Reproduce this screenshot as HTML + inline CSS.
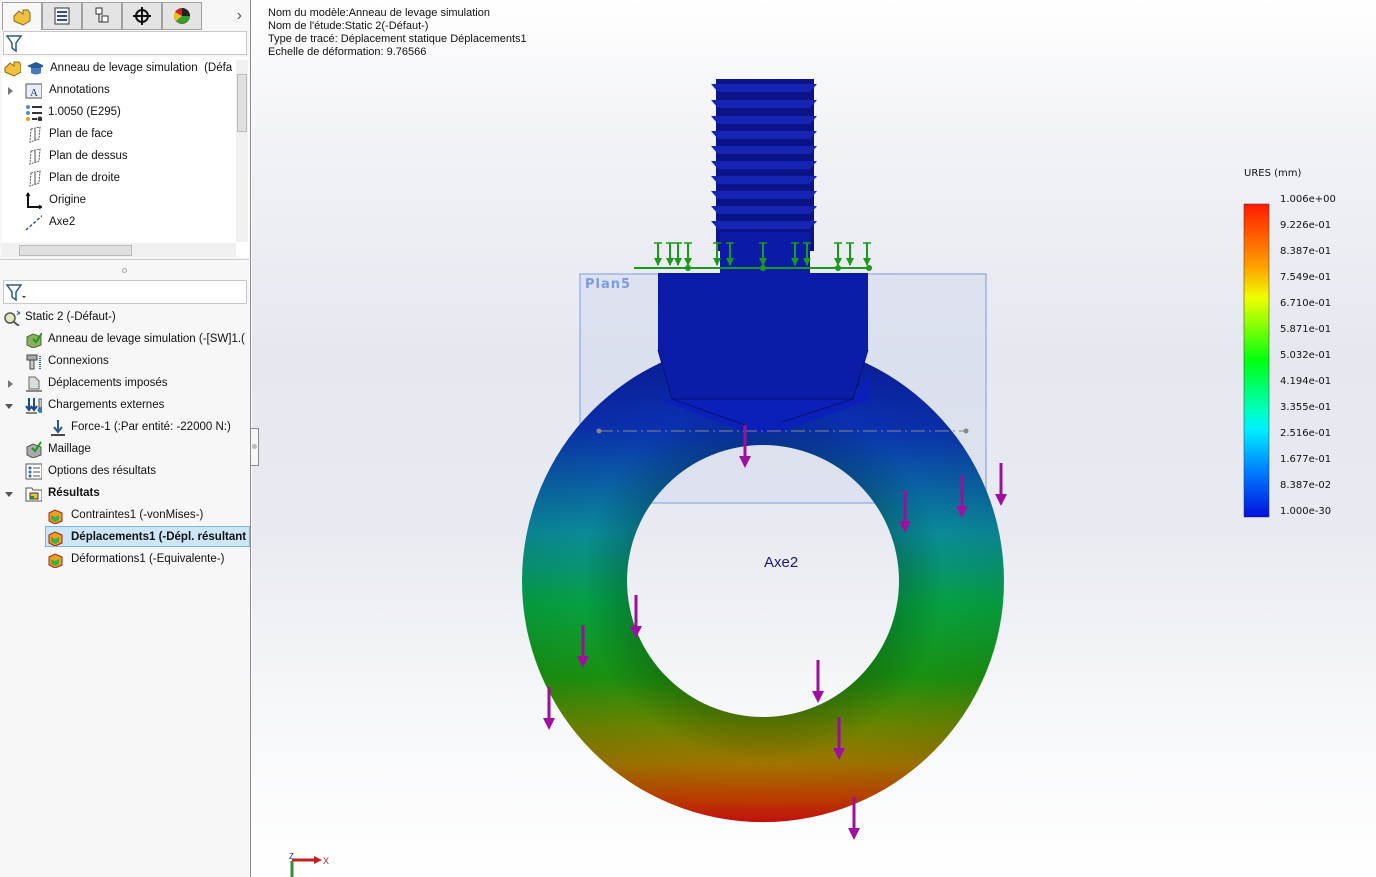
<!DOCTYPE html>
<html><head><meta charset="utf-8">
<style>
*{margin:0;padding:0;box-sizing:border-box}
body{width:1376px;height:877px;overflow:hidden;position:relative;font-family:"Liberation Sans",sans-serif;background:#fff}
#left{position:absolute;left:0;top:0;width:251px;height:877px;background:#f7f7f7;border-right:1px solid #8a8a90}
.tabs{position:absolute;top:2px;left:2px;height:28px;display:flex}
.tab{width:40px;height:28px;border:1px solid #a0a0a0;background:#e4e4e4;margin-right:0;display:flex;align-items:center;justify-content:center}
.tab.sel{background:#f7f7f7;border-bottom:none}
.filter{position:absolute;left:3px;width:244px;height:24px;border:1px solid #c8c8c8;background:#fff}
.row{position:absolute;left:0;height:22px;font-size:11.5px;color:#111;white-space:nowrap;line-height:22px}
.row .ic{position:absolute;top:3px;width:17px;height:17px}
.row span{position:absolute}
.tri{position:absolute;top:8px;width:0;height:0}
.tri.r{border-left:5px solid #777;border-top:4px solid transparent;border-bottom:4px solid transparent}
.tri.d{border-top:5px solid #555;border-left:4px solid transparent;border-right:4px solid transparent;top:10px}
#view{position:absolute;left:252px;top:0;width:1124px;height:877px;background:linear-gradient(180deg,#ffffff 0%,#f2f3f7 15%,#e6e8f0 40%,#e9eaf1 60%,#f6f7f9 80%,#ffffff 100%)}
.info{position:absolute;left:268px;font-size:11px;color:#111;line-height:13px}
.leg{position:absolute;left:1280px;font-size:10px;font-family:"DejaVu Sans","Liberation Sans",sans-serif;color:#111}
</style></head><body>
<div id="view"></div>
<div id="left">
  <div class="tabs">
    <div class="tab sel"><svg width="22" height="20"><path d="M3 9 L8 4 L12 7 L12 3 L17 3 L19 6 L19 14 L12 18 L3 14Z" fill="#f0c040" stroke="#8a6a10"/></svg></div>
    <div class="tab"><svg width="20" height="20"><rect x="3" y="2" width="14" height="16" fill="#fff" stroke="#333"/><path d="M5 6h10M5 10h10M5 14h10" stroke="#2a4a9a" stroke-width="2"/></svg></div>
    <div class="tab"><svg width="20" height="20"><rect x="4" y="2" width="6" height="6" fill="#fff" stroke="#333"/><rect x="10" y="10" width="6" height="6" fill="#fff" stroke="#333"/><path d="M7 8v8h3" stroke="#333" fill="none"/></svg></div>
    <div class="tab"><svg width="20" height="20"><circle cx="10" cy="10" r="6" fill="none" stroke="#111" stroke-width="2"/><path d="M10 1v18M1 10h18" stroke="#111" stroke-width="2"/></svg></div>
    <div class="tab"><svg width="20" height="20"><circle cx="10" cy="10" r="8" fill="#d02020"/><path d="M10 10 L18 10 A8 8 0 0 1 4 15Z" fill="#30a030"/><path d="M10 10 L4 15 A8 8 0 0 1 3 6Z" fill="#f0c020"/><path d="M10 10L10 2A8 8 0 0 1 18 10Z" fill="#222"/></svg></div>
    <div style="width:40px;color:#555;font-size:16px;line-height:28px;text-align:right">›</div>
  </div>
  <div class="filter" style="top:31px"><svg width="20" height="22"><path d="M3 4h14l-5 7v8l-4-3v-5z" fill="#fff" stroke="#2a5a8a" stroke-width="1.5"/></svg></div>
  <div style="position:absolute;left:2px;top:57px;width:247px;height:200px;background:#fff"></div>
  <div style="position:absolute;left:236px;top:60px;width:12px;height:182px;background:#f0f0f0"></div>
  <div style="position:absolute;left:237px;top:74px;width:10px;height:58px;background:#e0e0e0;border:1px solid #bbb"></div>
  <div style="position:absolute;left:2px;top:243px;width:234px;height:14px;background:#f0f0f0"></div>
  <div style="position:absolute;left:19px;top:245px;width:113px;height:11px;background:#e0e0e0;border:1px solid #bbb"></div>
  <div style="position:absolute;left:0;top:259px;width:251px;height:1px;background:#ccc"></div>
  <div style="position:absolute;left:122px;top:268px;width:5px;height:5px;border-radius:50%;border:1px solid #aaa"></div>
  <div class="filter" style="top:280px"><svg width="24" height="22"><path d="M3 4h14l-5 7v8l-4-3v-5z" fill="#fff" stroke="#2a5a8a" stroke-width="1.5"/><path d="M18 15h4l-2 2z" fill="#333"/></svg></div>

  <div class="row" style="top:57px"><svg class="ic" style="left:4px" width="20" height="17"><path d="M1 8 L6 3 L10 6 L10 2 L15 2 L17 5 L17 12 L10 16 L1 12Z" fill="#f0c040" stroke="#8a6a10"/></svg><svg class="ic" style="left:26px" width="20" height="17"><path d="M1 6 L10 2 L19 6 L10 10Z" fill="#2a5a9a"/><path d="M5 8v5c3 2 7 2 10 0V8" fill="#4a7aba"/></svg><span style="left:50px">Anneau de levage simulation &nbsp;(Défa</span></div>
  <div class="row" style="top:79px"><i class="tri r" style="left:8px"></i><svg class="ic" style="left:25px" width="18" height="17"><rect x="1" y="2" width="16" height="14" fill="#e8eef8" stroke="#555"/><text x="5" y="14" font-size="11" font-family="Liberation Serif" fill="#1a3a8a">A</text></svg><span style="left:49px">Annotations</span></div>
  <div class="row" style="top:101px"><svg class="ic" style="left:25px" width="18" height="17"><circle cx="3" cy="3" r="2" fill="#5a8ac0"/><circle cx="3" cy="9" r="2" fill="#5a8ac0"/><circle cx="3" cy="15" r="2" fill="#e0a020"/><path d="M7 3h10M7 9h10M7 15h5" stroke="#333" stroke-width="2"/><circle cx="15" cy="15" r="2.5" fill="#333"/></svg><span style="left:48px">1.0050 (E295)</span></div>
  <div class="row" style="top:123px"><svg class="ic" style="left:27px" width="16" height="17"><path d="M4 3 L13 1 L12 13 L3 16Z" fill="none" stroke="#555" stroke-dasharray="2 1"/><path d="M8 3v12" stroke="#555"/></svg><span style="left:49px">Plan de face</span></div>
  <div class="row" style="top:145px"><svg class="ic" style="left:27px" width="16" height="17"><path d="M4 3 L13 1 L12 13 L3 16Z" fill="none" stroke="#555" stroke-dasharray="2 1"/><path d="M8 3v12" stroke="#555"/></svg><span style="left:49px">Plan de dessus</span></div>
  <div class="row" style="top:167px"><svg class="ic" style="left:27px" width="16" height="17"><path d="M4 3 L13 1 L12 13 L3 16Z" fill="none" stroke="#555" stroke-dasharray="2 1"/><path d="M8 3v12" stroke="#555"/></svg><span style="left:49px">Plan de droite</span></div>
  <div class="row" style="top:189px"><svg class="ic" style="left:25px" width="20" height="17"><path d="M3 1v14h13" stroke="#111" stroke-width="2" fill="none"/><path d="M1 4l2-3 2 3M14 13l3 2-3 2" stroke="#111" fill="none"/></svg><span style="left:49px">Origine</span></div>
  <div class="row" style="top:211px"><svg class="ic" style="left:25px" width="20" height="17"><path d="M1 16 L18 1" stroke="#2a5a8a" stroke-width="1.5" stroke-dasharray="3 2"/></svg><span style="left:49px">Axe2</span></div>
  <div class="row" style="top:233px;height:10px;overflow:hidden"><svg class="ic" style="left:28px" width="18" height="17"><circle cx="9" cy="9" r="7" fill="#3a7ab0"/></svg><span style="left:49px;top:-2px">Révolution1</span></div>

  <div class="row" style="top:306px"><svg class="ic" style="left:3px" width="20" height="17"><circle cx="7" cy="9" r="5" fill="#e0e8c0" stroke="#555" stroke-width="1.5"/><path d="M11 13l5 4" stroke="#555" stroke-width="2"/><path d="M14 2l4 4M18 2l-4 4" stroke="#2a6ab0"/></svg><span style="left:25px">Static 2 (-Défaut-)</span></div>
  <div class="row" style="top:328px"><svg class="ic" style="left:25px" width="18" height="17"><path d="M2 6l6-3 8 3v8l-8 3-6-3z" fill="#8ab060" stroke="#4a6a30"/><path d="M8 8l3 3 6-9" stroke="#1a9a1a" stroke-width="2" fill="none"/></svg><span style="left:48px">Anneau de levage simulation (-[SW]1.(</span></div>
  <div class="row" style="top:350px"><svg class="ic" style="left:25px" width="18" height="17"><rect x="2" y="2" width="10" height="5" fill="#aaa" stroke="#444"/><rect x="5" y="7" width="4" height="9" fill="#ccc" stroke="#444"/><path d="M15 3v13" stroke="#2a6ab0" stroke-dasharray="1 1" stroke-width="2"/></svg><span style="left:48px">Connexions</span></div>
  <div class="row" style="top:372px"><i class="tri r" style="left:8px"></i><svg class="ic" style="left:25px" width="18" height="17"><path d="M4 2h6l4 4v8H4z" fill="#ddd" stroke="#666"/><path d="M1 16h16" stroke="#888" stroke-width="2"/></svg><span style="left:48px">Déplacements imposés</span></div>
  <div class="row" style="top:394px"><i class="tri d" style="left:5px"></i><svg class="ic" style="left:25px" width="20" height="17"><path d="M4 1v12M1 9l3 4 3-4M9 1v12M6 9l3 4 3-4" stroke="#1a4a8a" stroke-width="2" fill="none"/><path d="M1 16h11" stroke="#111"/><rect x="14" y="2" width="3" height="10" fill="#ccc" stroke="#555"/><circle cx="15.5" cy="13" r="3" fill="#3a7ab0"/></svg><span style="left:48px">Chargements externes</span></div>
  <div class="row" style="top:416px"><svg class="ic" style="left:49px" width="18" height="17"><path d="M9 1v11M5 8l4 5 4-5" stroke="#2a5a8a" stroke-width="2" fill="none"/><path d="M2 16h14" stroke="#111" stroke-width="1.5"/></svg><span style="left:71px">Force-1 (:Par entité: -22000 N:)</span></div>
  <div class="row" style="top:438px"><svg class="ic" style="left:25px" width="18" height="17"><path d="M2 6l6-3 8 3v8l-8 3-6-3z" fill="#aaa" stroke="#555"/><path d="M7 7l3 3 6-9" stroke="#1a9a1a" stroke-width="2" fill="none"/></svg><span style="left:48px">Maillage</span></div>
  <div class="row" style="top:460px"><svg class="ic" style="left:25px" width="18" height="17"><rect x="1" y="1" width="16" height="15" fill="#fff" stroke="#555"/><circle cx="5" cy="5" r="1.5" fill="#2a6ab0"/><circle cx="5" cy="9" r="1.5" fill="#2a6ab0"/><circle cx="5" cy="13" r="1.5" fill="#2a6ab0"/><path d="M8 5h7M8 9h7M8 13h7" stroke="#555"/></svg><span style="left:48px">Options des résultats</span></div>
  <div class="row" style="top:482px"><i class="tri d" style="left:5px"></i><svg class="ic" style="left:25px" width="18" height="17"><path d="M1 3h6l1 2h9v11H1z" fill="#fff" stroke="#555"/><rect x="5" y="8" width="8" height="6" fill="#f0c040" stroke="#333"/><rect x="5" y="11" width="4" height="3" fill="#2a8a2a"/></svg><span style="left:48px;font-weight:bold">Résultats</span></div>
  <div class="row" style="top:504px"><svg class="ic" style="left:47px" width="20" height="17"><path d="M2 6l6-3 7 3v8l-7 3-6-3z" fill="#f0a020" stroke="#a02020"/><path d="M4 8l4 2 4-2v5l-4 2-4-2z" fill="#40b040"/></svg><span style="left:71px">Contraintes1 (-vonMises-)</span></div>
  <div style="position:absolute;left:45px;top:526px;width:205px;height:21px;background:#cde6f7;border:1px solid #7ab8e4"></div>
  <div class="row" style="top:526px"><svg class="ic" style="left:47px" width="20" height="17"><path d="M2 6l6-3 7 3v8l-7 3-6-3z" fill="#f0a020" stroke="#a02020"/><path d="M4 8l4 2 4-2v5l-4 2-4-2z" fill="#40b040"/></svg><span style="left:71px;font-weight:bold">Déplacements1 (-Dépl. résultant</span></div>
  <div class="row" style="top:548px"><svg class="ic" style="left:47px" width="20" height="17"><path d="M2 6l6-3 7 3v8l-7 3-6-3z" fill="#f0a020" stroke="#a02020"/><path d="M4 8l4 2 4-2v5l-4 2-4-2z" fill="#40b040"/></svg><span style="left:71px">Déformations1 (-Equivalente-)</span></div>
</div>
<div style="position:absolute;left:251px;top:428px;width:8px;height:38px;background:#f7f7f7;border:1px solid #8a8a90;border-left:none"></div>
<div style="position:absolute;left:252px;top:444px;width:5px;height:5px;border-radius:50%;background:#bbb"></div>

<div class="info" style="top:7px">Nom du modèle:Anneau de levage simulation</div>
<div class="info" style="top:20px">Nom de l'étude:Static 2(-Défaut-)</div>
<div class="info" style="top:33px">Type de tracé: Déplacement statique Déplacements1</div>
<div class="info" style="top:46px">Echelle de déformation: 9.76566</div>

<svg style="position:absolute;left:0;top:0" width="1376" height="877">
<defs>
<linearGradient id="ring" x1="0" y1="340" x2="0" y2="822" gradientUnits="userSpaceOnUse">
<stop offset="0" stop-color="#0a1a98"/>
<stop offset="0.18" stop-color="#0a30b0"/>
<stop offset="0.4" stop-color="#0a8a98"/>
<stop offset="0.55" stop-color="#06a040"/>
<stop offset="0.7" stop-color="#1a9010"/>
<stop offset="0.8" stop-color="#6a8400"/>
<stop offset="0.88" stop-color="#a07400"/>
<stop offset="0.95" stop-color="#c04000"/>
<stop offset="1" stop-color="#cc1010"/>
</linearGradient>
<radialGradient id="shade" cx="763" cy="581" r="241" gradientUnits="userSpaceOnUse">
<stop offset="0.56" stop-color="#000" stop-opacity="0.18"/>
<stop offset="0.75" stop-color="#000" stop-opacity="0"/>
<stop offset="1" stop-color="#000" stop-opacity="0.05"/>
</radialGradient>
<linearGradient id="leg" x1="0" y1="0" x2="0" y2="1">
<stop offset="0" stop-color="#ff1a00"/><stop offset="0.2" stop-color="#ffa000"/><stop offset="0.3" stop-color="#f0ff00"/><stop offset="0.5" stop-color="#00ff10"/><stop offset="0.66" stop-color="#00ffc0"/><stop offset="0.72" stop-color="#00f0ff"/><stop offset="0.85" stop-color="#0080ff"/><stop offset="1" stop-color="#0010e0"/>
</linearGradient>
</defs>
<!-- plane (behind) -->
<rect x="580" y="274" width="406" height="229" fill="rgba(170,190,235,0.18)" stroke="#7a9ce0" stroke-width="1"/>
<text x="585" y="288" font-family="DejaVu Sans" font-weight="bold" font-size="13" fill="#7a9ce0" letter-spacing="1">Plan5</text>
<path fill-rule="evenodd" fill="url(#ring)" d="M522 581 A241 241 0 1 0 1004 581 A241 241 0 1 0 522 581Z M627 581 A136 136 0 1 1 899 581 A136 136 0 1 1 627 581Z"/>
<path fill-rule="evenodd" fill="url(#shade)" d="M522 581 A241 241 0 1 0 1004 581 A241 241 0 1 0 522 581Z M627 581 A136 136 0 1 1 899 581 A136 136 0 1 1 627 581Z"/>
<rect x="660" y="395" width="200" height="40" fill="#0a22b8" opacity="0"/>
<!-- thread -->
<rect x="716" y="79" width="98" height="172" fill="#0a1488"/>
<g fill="#1624b4">
<path d="M711 84 L817 84 L810 92 L718 92Z"/><path d="M711 100 L817 100 L810 108 L718 108Z"/><path d="M711 116 L817 116 L810 124 L718 124Z"/><path d="M711 131 L817 131 L810 139 L718 139Z"/><path d="M711 146 L817 146 L810 154 L718 154Z"/><path d="M711 161 L817 161 L810 169 L718 169Z"/><path d="M711 176 L817 176 L810 184 L718 184Z"/><path d="M711 191 L817 191 L810 199 L718 199Z"/><path d="M711 206 L817 206 L810 214 L718 214Z"/><path d="M711 221 L817 221 L810 229 L718 229Z"/>
</g>
<rect x="720" y="232" width="90" height="42" fill="#0c1aa8"/>
<!-- head -->
<path d="M680 398 L855 398 L870 370 L870 400 L780 432 L745 432 L660 400Z" fill="#0a20b8"/>
<path d="M658 273 L868 273 L868 350 L853 399 L672 399 L658 350Z" fill="#0a1ca8"/>
<path d="M658 350 L672 399 L853 399 L868 350" stroke="#061070" stroke-width="1" fill="none"/>
<path d="M672 399 L745 425 M853 399 L782 422" stroke="#061070" stroke-width="1"/>
<path d="M599 431 L966 431" stroke="#888" stroke-dasharray="14 4 2 4"/>
<circle cx="599" cy="431" r="2.5" fill="#888"/><circle cx="966" cy="431" r="2.5" fill="#888"/>
<text x="764" y="567" font-family="Liberation Sans" font-size="15" fill="#1a1a7a">Axe2</text>
<!-- green fixtures -->
<g stroke="#1a9a1a" stroke-width="2" fill="#1a9a1a">
<path d="M634 268 L870 268"/>
<path d="M658 243v22M670 243v22M678 243v22M688 243v22M717 243v22M730 243v22M763 243v22M795 243v22M807 243v22M838 243v22M850 243v22M867 243v22"/>
<path d="M654 243h8M666 243h8M674 243h8M684 243h8M713 243h8M726 243h8M759 243h8M791 243h8M803 243h8M834 243h8M846 243h8M863 243h8" stroke-width="1.5"/>
</g>
<g fill="#1a9a1a">
<path d="M654 258h8l-4 8zM666 258h8l-4 8zM674 258h8l-4 8zM684 258h8l-4 8zM713 258h8l-4 8zM726 258h8l-4 8zM759 258h8l-4 8zM791 258h8l-4 8zM803 258h8l-4 8zM834 258h8l-4 8zM846 258h8l-4 8zM863 258h8l-4 8z"/>
<circle cx="688" cy="268" r="3"/><circle cx="763" cy="268" r="3"/><circle cx="838" cy="268" r="3"/><circle cx="869" cy="268" r="3"/>
</g>
<!-- purple arrows -->
<g stroke="#9a109a" stroke-width="3" fill="#a010a0">
<path d="M745 425v33M905 490v33M962 475v33M1001 463v33M636 595v33M583 625v33M549 687v33M818 660v33M839 717v33M854 797v33"/>
</g>
<g fill="#a010a0">
<path d="M739 456h12l-6 12zM899 521h12l-6 12zM956 506h12l-6 12zM995 494h12l-6 12zM630 626h12l-6 12zM577 656h12l-6 12zM543 718h12l-6 12zM812 691h12l-6 12zM833 748h12l-6 12zM848 828h12l-6 12z"/>
</g>
<!-- legend -->
<rect x="1244" y="204" width="25" height="313" fill="url(#leg)" stroke="#333" stroke-width="0.5"/>
<!-- axis triad -->
<path d="M292 860 L316 860" stroke="#c02020" stroke-width="3"/><path d="M314 856 L322 860 L314 864Z" fill="#c02020"/>
<path d="M292 861 L292 877" stroke="#3a8a3a" stroke-width="3"/>
<text x="323" y="864" font-size="9" fill="#c02020" font-family="Liberation Sans">X</text>
<text x="289" y="859" font-size="8" fill="#2020c0" font-family="Liberation Sans">Z</text>
</svg>
<div class="leg" style="left:1244px;top:168px;font-size:10px">URES (mm)</div>
<div class="leg" style="top:194px">1.006e+00</div>
<div class="leg" style="top:220px">9.226e-01</div>
<div class="leg" style="top:246px">8.387e-01</div>
<div class="leg" style="top:272px">7.549e-01</div>
<div class="leg" style="top:298px">6.710e-01</div>
<div class="leg" style="top:324px">5.871e-01</div>
<div class="leg" style="top:350px">5.032e-01</div>
<div class="leg" style="top:376px">4.194e-01</div>
<div class="leg" style="top:402px">3.355e-01</div>
<div class="leg" style="top:428px">2.516e-01</div>
<div class="leg" style="top:454px">1.677e-01</div>
<div class="leg" style="top:480px">8.387e-02</div>
<div class="leg" style="top:506px">1.000e-30</div>
</body></html>
